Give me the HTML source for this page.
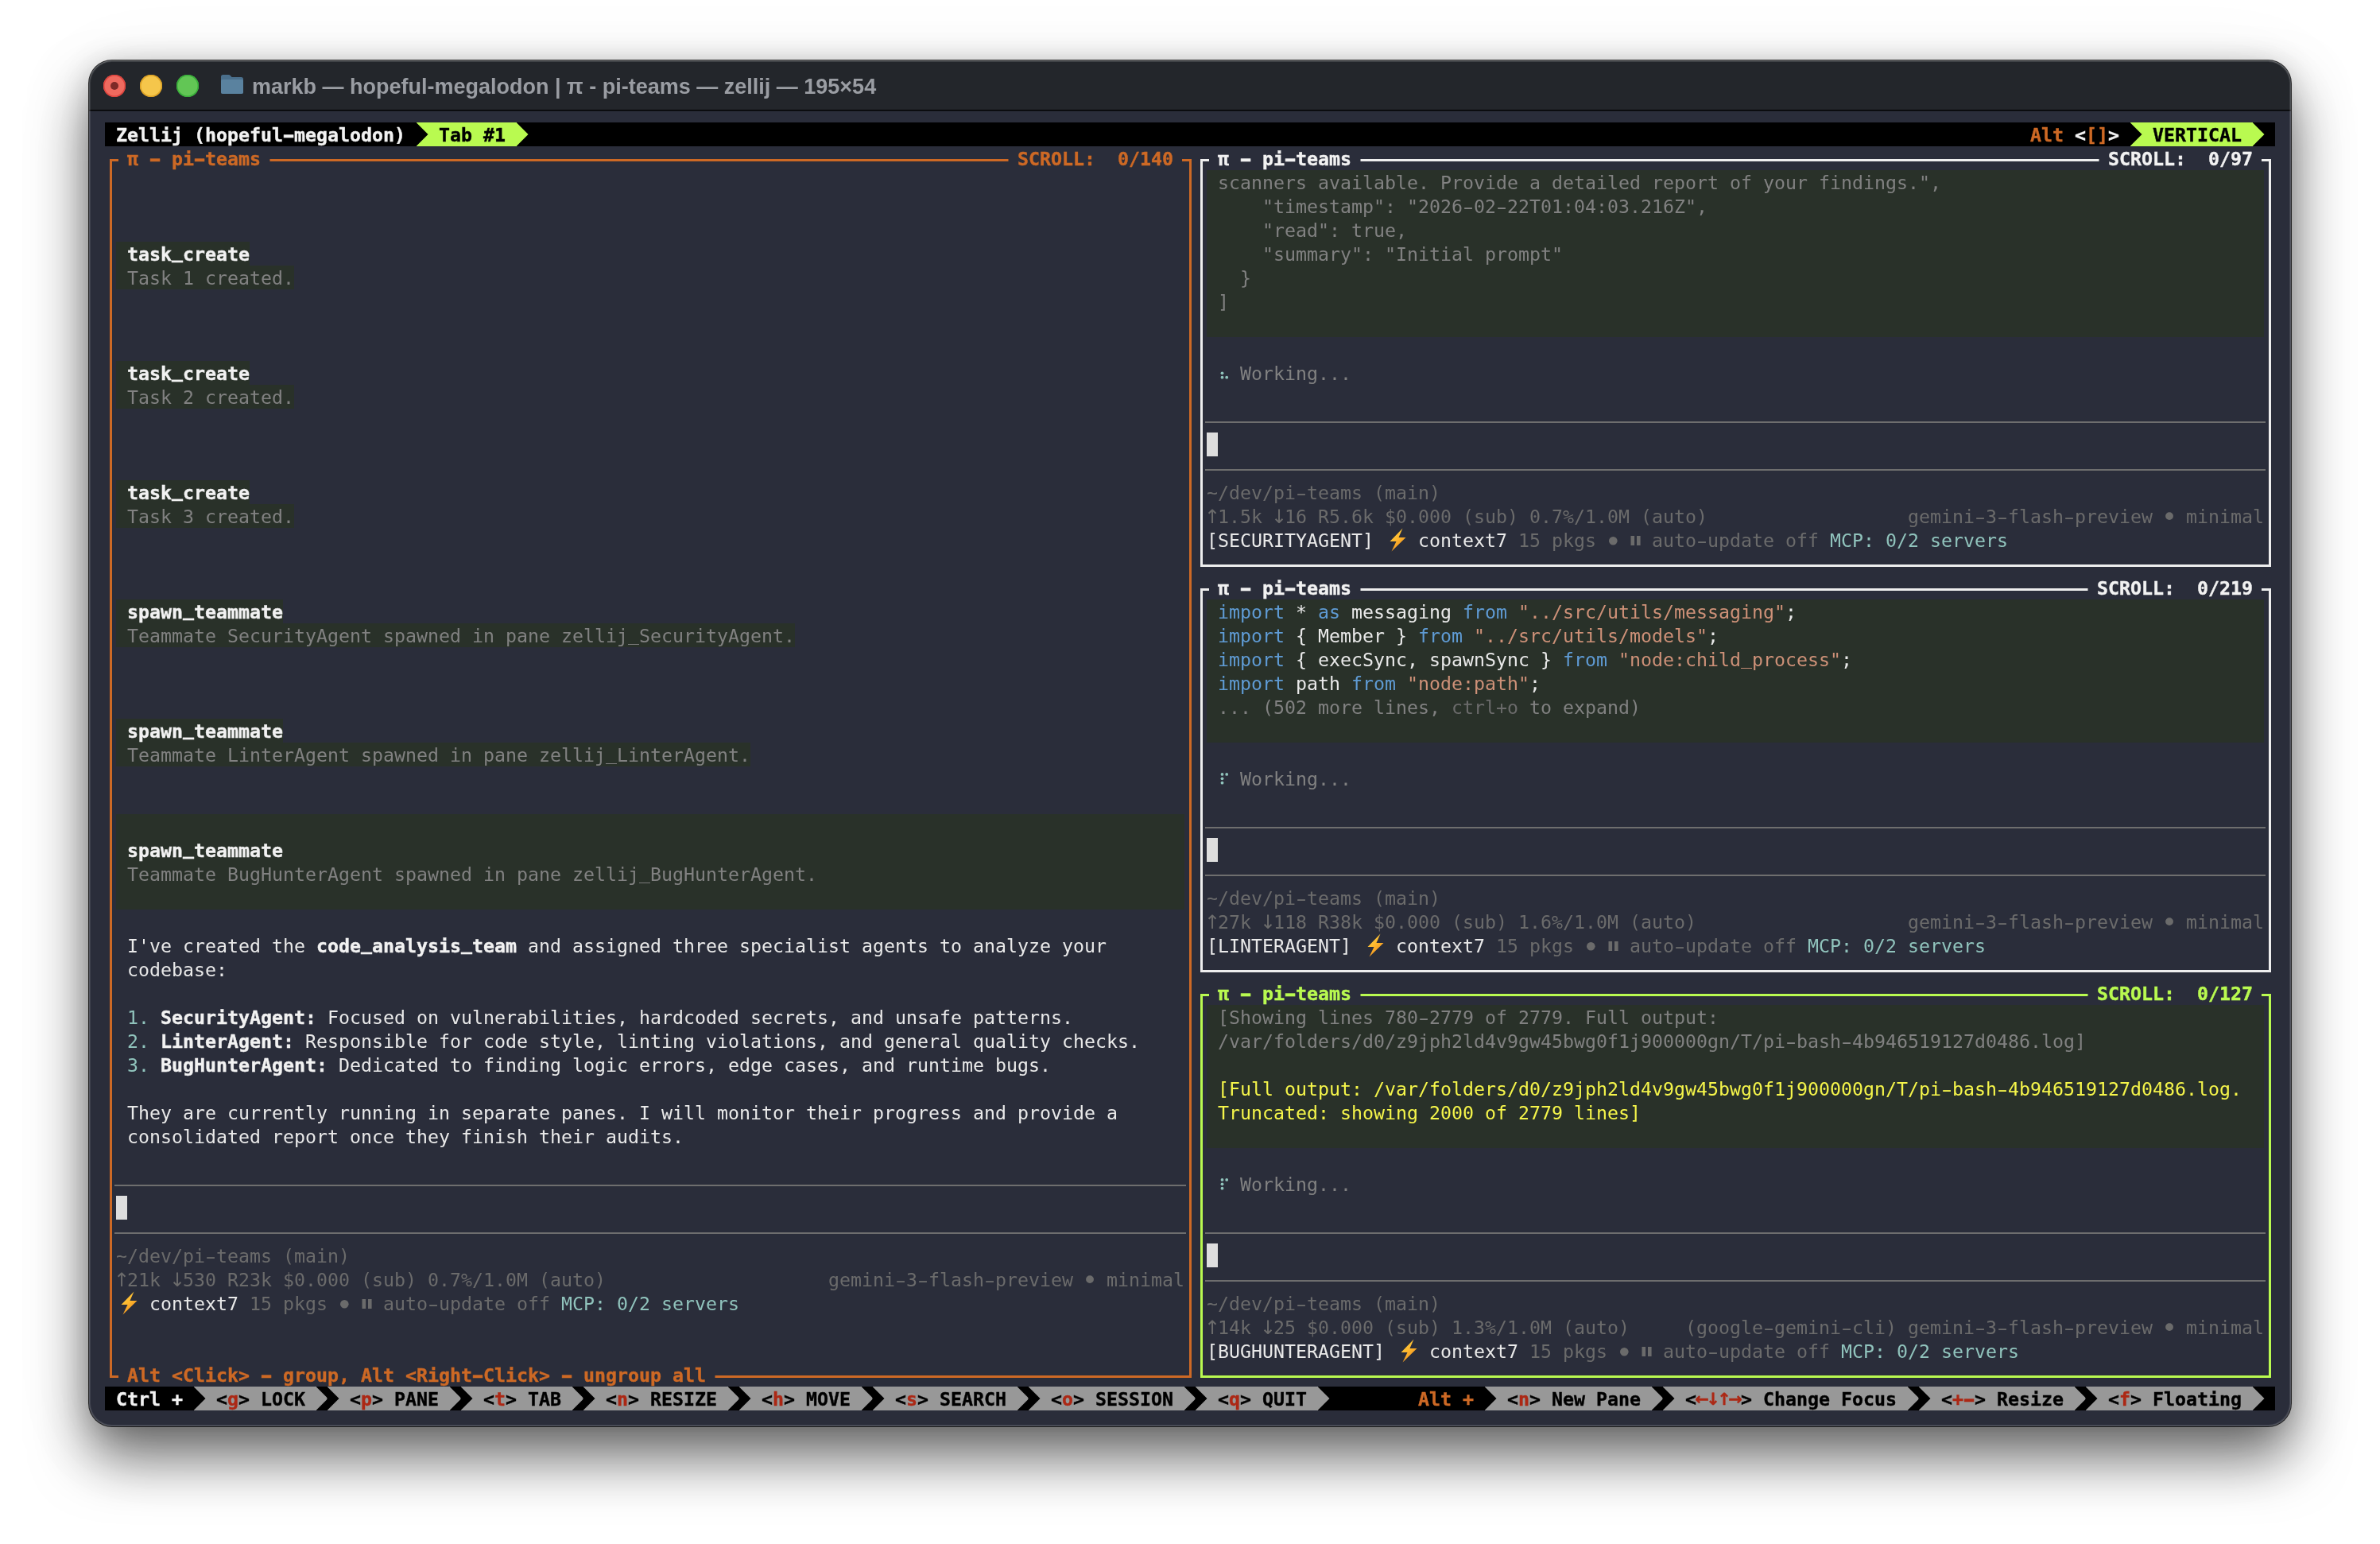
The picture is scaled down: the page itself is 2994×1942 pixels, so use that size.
<!DOCTYPE html><html><head><meta charset="utf-8"><title>zellij</title><style>
html,body{margin:0;padding:0;}
body{width:2994px;height:1942px;background:#fff;position:relative;overflow:hidden;}
#win{position:absolute;left:112px;top:76px;width:2770px;height:1718px;border-radius:29px;background:#2a2d3a;
 box-shadow:0 0 0 1px rgba(0,0,0,.8),0 40px 70px rgba(0,0,0,.55),0 4px 36px rgba(0,0,0,.15),0 16px 110px rgba(0,0,0,.07);}
#tb{position:absolute;left:0;top:0;width:2770px;height:62px;border-radius:29px 29px 0 0;background:#23262b;box-shadow:0 1px 0 #000,0 2px 0 rgba(0,0,0,.45);}
#edge{position:absolute;left:0;top:0;width:2770px;height:1718px;border-radius:29px;box-shadow:inset 0 1px 0 rgba(255,255,255,.16),inset 0 0 0 1px rgba(255,255,255,.12),inset 0 0 0 2px rgba(255,255,255,.10);pointer-events:none;}
.tl{position:absolute;top:18px;width:28px;height:28px;border-radius:50%;}
#ttl{position:absolute;left:205px;top:14.5px;height:36px;line-height:36px;font-family:"Liberation Sans",sans-serif;font-weight:bold;font-size:27px;color:#9a9da3;white-space:pre;will-change:transform;}
#lay{position:absolute;left:0;top:0;will-change:transform;}
.b{position:absolute;height:30px;}
.t{position:absolute;left:0;height:30px;line-height:30px;white-space:pre;font-family:"DejaVu Sans Mono","Liberation Mono",monospace;font-size:23.25px;letter-spacing:0.0023px;color:#e9e9e9;}
.t>span{position:absolute;top:0;}
.hy{display:inline-block;transform:scaleX(1.65);}
.us{position:relative;top:-3px;}
.w{color:#e9e9e9;} .wb{color:#f2f2f2;font-weight:bold;} .g{color:#818181;} .d{color:#6b6b6b;} .a{color:#90c3bc;}
.o{color:#cd6925;font-weight:bold;} .k{color:#000;font-weight:bold;} .r{color:#ac2815;font-weight:bold;}
.ar,.ar2,.bl{width:14px;text-align:center;font-family:"DejaVu Sans","Liberation Sans",sans-serif;letter-spacing:0;}
.ar{font-size:24px;} .ar2{font-size:21px;} .bl{font-size:34px;}
.ar,.ar2,.bl{display:flex;justify-content:center;}
.wb,.o,.k,.r,.gb{-webkit-text-stroke:0.4px currentColor;}
.y{color:#f5f54a;} .kw{color:#5f9bd4;} .s{color:#ce9178;} .gb{color:#b9fa50;font-weight:bold;}
</style></head><body>
<div id="win"><div id="tb">
<div class="tl" style="left:18px;background:#ee6a5f;box-shadow:inset 0 0 0 1.5px #e0443e"><div style="position:absolute;left:9px;top:9px;width:10px;height:10px;border-radius:50%;background:#7d2a27"></div></div>
<div class="tl" style="left:63.8px;background:#f5c64b;box-shadow:inset 0 0 0 1.5px #dea224"></div>
<div class="tl" style="left:109.6px;background:#62c655;box-shadow:inset 0 0 0 1.5px #38b03a"></div>
<svg style="position:absolute;left:165px;top:17px" width="30" height="26" viewBox="0 0 30 26"><path d="M1 3.5Q1 1 3.5 1H10.5Q12 1 13 2.2L14.6 4H26.5Q29 4 29 6.5V22.5Q29 25 26.5 25H3.5Q1 25 1 22.5Z" fill="#4a6f8c"/><path d="M1 8.5Q1 7 2.8 7H27.2Q29 7 29 8.5V22.5Q29 25 26.5 25H3.5Q1 25 1 22.5Z" fill="#5a829f"/></svg>
<div id="ttl">markb — hopeful-megalodon | π - pi-teams — zellij — 195×54</div>
</div><div id="edge"></div></div>
<div id="lay">
<div class="b" style="left:132px;top:154px;width:2730px;background:#000"></div>
<div class="b" style="left:538px;top:154px;width:112px;background:#b9fa50"></div>
<div class="b" style="left:2694px;top:154px;width:140px;background:#b9fa50"></div>
<div class="b" style="left:132px;top:1744px;width:2730px;background:#000"></div>
<div class="b" style="left:258px;top:1744px;width:140px;background:#989898"></div>
<div class="b" style="left:426px;top:1744px;width:140px;background:#989898"></div>
<div class="b" style="left:594px;top:1744px;width:126px;background:#989898"></div>
<div class="b" style="left:748px;top:1744px;width:168px;background:#989898"></div>
<div class="b" style="left:944px;top:1744px;width:140px;background:#989898"></div>
<div class="b" style="left:1112px;top:1744px;width:168px;background:#989898"></div>
<div class="b" style="left:1308px;top:1744px;width:182px;background:#989898"></div>
<div class="b" style="left:1518px;top:1744px;width:140px;background:#989898"></div>
<div class="b" style="left:1882px;top:1744px;width:196px;background:#989898"></div>
<div class="b" style="left:2106px;top:1744px;width:294px;background:#989898"></div>
<div class="b" style="left:2428px;top:1744px;width:182px;background:#989898"></div>
<div class="b" style="left:2638px;top:1744px;width:196px;background:#989898"></div>
<div class="b" style="left:146px;top:304px;width:168px;background:#293129"></div>
<div class="b" style="left:146px;top:334px;width:224px;background:#293129"></div>
<div class="b" style="left:146px;top:454px;width:168px;background:#293129"></div>
<div class="b" style="left:146px;top:484px;width:224px;background:#293129"></div>
<div class="b" style="left:146px;top:604px;width:168px;background:#293129"></div>
<div class="b" style="left:146px;top:634px;width:224px;background:#293129"></div>
<div class="b" style="left:146px;top:754px;width:210px;background:#293129"></div>
<div class="b" style="left:146px;top:784px;width:854px;background:#293129"></div>
<div class="b" style="left:146px;top:904px;width:210px;background:#293129"></div>
<div class="b" style="left:146px;top:934px;width:798px;background:#293129"></div>
<div class="b" style="left:146px;top:1024px;width:1344px;background:#293129"></div>
<div class="b" style="left:146px;top:1054px;width:1344px;background:#293129"></div>
<div class="b" style="left:146px;top:1084px;width:1344px;background:#293129"></div>
<div class="b" style="left:146px;top:1114px;width:1344px;background:#293129"></div>
<div class="b" style="left:1518px;top:214px;width:1330px;background:#293129"></div>
<div class="b" style="left:1518px;top:244px;width:1330px;background:#293129"></div>
<div class="b" style="left:1518px;top:274px;width:1330px;background:#293129"></div>
<div class="b" style="left:1518px;top:304px;width:1330px;background:#293129"></div>
<div class="b" style="left:1518px;top:334px;width:1330px;background:#293129"></div>
<div class="b" style="left:1518px;top:364px;width:1330px;background:#293129"></div>
<div class="b" style="left:1518px;top:394px;width:1330px;background:#293129"></div>
<div class="b" style="left:1518px;top:754px;width:1330px;background:#293129"></div>
<div class="b" style="left:1518px;top:784px;width:1330px;background:#293129"></div>
<div class="b" style="left:1518px;top:814px;width:1330px;background:#293129"></div>
<div class="b" style="left:1518px;top:844px;width:1330px;background:#293129"></div>
<div class="b" style="left:1518px;top:874px;width:1330px;background:#293129"></div>
<div class="b" style="left:1518px;top:904px;width:1330px;background:#293129"></div>
<div class="b" style="left:1518px;top:1264px;width:1330px;background:#293129"></div>
<div class="b" style="left:1518px;top:1294px;width:1330px;background:#293129"></div>
<div class="b" style="left:1518px;top:1324px;width:1330px;background:#293129"></div>
<div class="b" style="left:1518px;top:1354px;width:1330px;background:#293129"></div>
<div class="b" style="left:1518px;top:1384px;width:1330px;background:#293129"></div>
<div class="b" style="left:1518px;top:1414px;width:1330px;background:#293129"></div>
<svg style="position:absolute;left:0;top:0" width="2994" height="1942" viewBox="0 0 2994 1942"><defs><linearGradient id="bg1" x1="0" y1="0" x2="0.6" y2="1"><stop offset="0" stop-color="#ffd94a"/><stop offset="0.55" stop-color="#fdb72e"/><stop offset="1" stop-color="#f08a1c"/></linearGradient></defs>
<rect x="524" y="154" width="14" height="30" fill="#b9fa50"/>
<polygon points="523.5,154 538.5,169.0 523.5,184" fill="#000"/>
<rect x="650" y="154" width="14" height="30" fill="#000"/>
<polygon points="649.5,154 664.5,169.0 649.5,184" fill="#b9fa50"/>
<rect x="2680" y="154" width="14" height="30" fill="#b9fa50"/>
<polygon points="2679.5,154 2694.5,169.0 2679.5,184" fill="#000"/>
<rect x="2834" y="154" width="14" height="30" fill="#000"/>
<polygon points="2833.5,154 2848.5,169.0 2833.5,184" fill="#b9fa50"/>
<rect x="244" y="1744" width="14" height="30" fill="#989898"/>
<polygon points="243.5,1744 258.5,1759.0 243.5,1774" fill="#000"/>
<rect x="398" y="1744" width="14" height="30" fill="#000"/>
<polygon points="397.5,1744 412.5,1759.0 397.5,1774" fill="#989898"/>
<rect x="412" y="1744" width="14" height="30" fill="#989898"/>
<polygon points="411.5,1744 426.5,1759.0 411.5,1774" fill="#000"/>
<rect x="566" y="1744" width="14" height="30" fill="#000"/>
<polygon points="565.5,1744 580.5,1759.0 565.5,1774" fill="#989898"/>
<rect x="580" y="1744" width="14" height="30" fill="#989898"/>
<polygon points="579.5,1744 594.5,1759.0 579.5,1774" fill="#000"/>
<rect x="720" y="1744" width="14" height="30" fill="#000"/>
<polygon points="719.5,1744 734.5,1759.0 719.5,1774" fill="#989898"/>
<rect x="734" y="1744" width="14" height="30" fill="#989898"/>
<polygon points="733.5,1744 748.5,1759.0 733.5,1774" fill="#000"/>
<rect x="916" y="1744" width="14" height="30" fill="#000"/>
<polygon points="915.5,1744 930.5,1759.0 915.5,1774" fill="#989898"/>
<rect x="930" y="1744" width="14" height="30" fill="#989898"/>
<polygon points="929.5,1744 944.5,1759.0 929.5,1774" fill="#000"/>
<rect x="1084" y="1744" width="14" height="30" fill="#000"/>
<polygon points="1083.5,1744 1098.5,1759.0 1083.5,1774" fill="#989898"/>
<rect x="1098" y="1744" width="14" height="30" fill="#989898"/>
<polygon points="1097.5,1744 1112.5,1759.0 1097.5,1774" fill="#000"/>
<rect x="1280" y="1744" width="14" height="30" fill="#000"/>
<polygon points="1279.5,1744 1294.5,1759.0 1279.5,1774" fill="#989898"/>
<rect x="1294" y="1744" width="14" height="30" fill="#989898"/>
<polygon points="1293.5,1744 1308.5,1759.0 1293.5,1774" fill="#000"/>
<rect x="1490" y="1744" width="14" height="30" fill="#000"/>
<polygon points="1489.5,1744 1504.5,1759.0 1489.5,1774" fill="#989898"/>
<rect x="1504" y="1744" width="14" height="30" fill="#989898"/>
<polygon points="1503.5,1744 1518.5,1759.0 1503.5,1774" fill="#000"/>
<rect x="1658" y="1744" width="14" height="30" fill="#000"/>
<polygon points="1657.5,1744 1672.5,1759.0 1657.5,1774" fill="#989898"/>
<rect x="1868" y="1744" width="14" height="30" fill="#989898"/>
<polygon points="1867.5,1744 1882.5,1759.0 1867.5,1774" fill="#000"/>
<rect x="2078" y="1744" width="14" height="30" fill="#000"/>
<polygon points="2077.5,1744 2092.5,1759.0 2077.5,1774" fill="#989898"/>
<rect x="2092" y="1744" width="14" height="30" fill="#989898"/>
<polygon points="2091.5,1744 2106.5,1759.0 2091.5,1774" fill="#000"/>
<rect x="2400" y="1744" width="14" height="30" fill="#000"/>
<polygon points="2399.5,1744 2414.5,1759.0 2399.5,1774" fill="#989898"/>
<rect x="2414" y="1744" width="14" height="30" fill="#989898"/>
<polygon points="2413.5,1744 2428.5,1759.0 2413.5,1774" fill="#000"/>
<rect x="2610" y="1744" width="14" height="30" fill="#000"/>
<polygon points="2609.5,1744 2624.5,1759.0 2609.5,1774" fill="#989898"/>
<rect x="2624" y="1744" width="14" height="30" fill="#989898"/>
<polygon points="2623.5,1744 2638.5,1759.0 2623.5,1774" fill="#000"/>
<rect x="2834" y="1744" width="14" height="30" fill="#000"/>
<polygon points="2833.5,1744 2848.5,1759.0 2833.5,1774" fill="#989898"/>
<rect x="138" y="200" width="3" height="1533" fill="#cd6925"/>
<rect x="1496" y="200" width="3" height="1533" fill="#cd6925"/>
<rect x="138" y="200" width="11" height="3" fill="#cd6925"/>
<rect x="339.5" y="200" width="929" height="3" fill="#cd6925"/>
<rect x="1487" y="200" width="12" height="3" fill="#cd6925"/>
<rect x="138" y="1730" width="11" height="3" fill="#cd6925"/>
<rect x="899.5" y="1730" width="599.5" height="3" fill="#cd6925"/>
<rect x="1510" y="200" width="3" height="513" fill="#eeeeee"/>
<rect x="2854" y="200" width="3" height="513" fill="#eeeeee"/>
<rect x="1510" y="200" width="11" height="3" fill="#eeeeee"/>
<rect x="1711.5" y="200" width="929" height="3" fill="#eeeeee"/>
<rect x="2845" y="200" width="12" height="3" fill="#eeeeee"/>
<rect x="1510" y="710" width="1347" height="3" fill="#eeeeee"/>
<rect x="1510" y="740" width="3" height="483" fill="#eeeeee"/>
<rect x="2854" y="740" width="3" height="483" fill="#eeeeee"/>
<rect x="1510" y="740" width="11" height="3" fill="#eeeeee"/>
<rect x="1711.5" y="740" width="915" height="3" fill="#eeeeee"/>
<rect x="2845" y="740" width="12" height="3" fill="#eeeeee"/>
<rect x="1510" y="1220" width="1347" height="3" fill="#eeeeee"/>
<rect x="1510" y="1250" width="3" height="483" fill="#b9fa50"/>
<rect x="2854" y="1250" width="3" height="483" fill="#b9fa50"/>
<rect x="1510" y="1250" width="11" height="3" fill="#b9fa50"/>
<rect x="1711.5" y="1250" width="915" height="3" fill="#b9fa50"/>
<rect x="2845" y="1250" width="12" height="3" fill="#b9fa50"/>
<rect x="1510" y="1730" width="1347" height="3" fill="#b9fa50"/>
<rect x="144" y="1490" width="1348" height="2" fill="#6e6e6e"/>
<rect x="146" y="1504" width="14" height="30" fill="#dedede"/>
<rect x="144" y="1550" width="1348" height="2" fill="#6e6e6e"/>
<polygon points="168.5,1624.5 152.5,1641 160.5,1641 154.5,1653.5 172.5,1636 163.5,1636" fill="url(#bg1)"/>
<circle cx="433.3" cy="1640.2" r="5.3" fill="#6b6b6b"/>
<rect x="455.5" y="1634" width="4.6" height="12" fill="#6b6b6b"/>
<rect x="463" y="1634" width="4.6" height="12" fill="#6b6b6b"/>
<circle cx="1537.5" cy="469.3" r="1.9" fill="#90c3bc"/>
<circle cx="1537.5" cy="474.7" r="1.9" fill="#90c3bc"/>
<circle cx="1543.2" cy="474.7" r="1.9" fill="#90c3bc"/>
<rect x="1516" y="530" width="1334" height="2" fill="#6e6e6e"/>
<rect x="1518" y="544" width="14" height="30" fill="#dedede"/>
<rect x="1516" y="590" width="1334" height="2" fill="#6e6e6e"/>
<polygon points="1764.5,664.5 1748.5,681 1756.5,681 1750.5,693.5 1768.5,676 1759.5,676" fill="url(#bg1)"/>
<circle cx="2029.3" cy="680.2" r="5.3" fill="#6b6b6b"/>
<rect x="2051.5" y="674" width="4.6" height="12" fill="#6b6b6b"/>
<rect x="2059" y="674" width="4.6" height="12" fill="#6b6b6b"/>
<circle cx="1537.5" cy="973.9" r="1.9" fill="#90c3bc"/>
<circle cx="1537.5" cy="979.3" r="1.9" fill="#90c3bc"/>
<circle cx="1537.5" cy="984.7" r="1.9" fill="#90c3bc"/>
<circle cx="1543.2" cy="973.9" r="1.9" fill="#90c3bc"/>
<rect x="1516" y="1040" width="1334" height="2" fill="#6e6e6e"/>
<rect x="1518" y="1054" width="14" height="30" fill="#dedede"/>
<rect x="1516" y="1100" width="1334" height="2" fill="#6e6e6e"/>
<polygon points="1736.5,1174.5 1720.5,1191 1728.5,1191 1722.5,1203.5 1740.5,1186 1731.5,1186" fill="url(#bg1)"/>
<circle cx="2001.3" cy="1190.2" r="5.3" fill="#6b6b6b"/>
<rect x="2023.5" y="1184" width="4.6" height="12" fill="#6b6b6b"/>
<rect x="2031" y="1184" width="4.6" height="12" fill="#6b6b6b"/>
<circle cx="1537.5" cy="1483.9" r="1.9" fill="#90c3bc"/>
<circle cx="1537.5" cy="1489.3" r="1.9" fill="#90c3bc"/>
<circle cx="1537.5" cy="1494.7" r="1.9" fill="#90c3bc"/>
<circle cx="1543.2" cy="1483.9" r="1.9" fill="#90c3bc"/>
<rect x="1516" y="1550" width="1334" height="2" fill="#6e6e6e"/>
<rect x="1518" y="1564" width="14" height="30" fill="#dedede"/>
<rect x="1516" y="1610" width="1334" height="2" fill="#6e6e6e"/>
<polygon points="1778.5,1684.5 1762.5,1701 1770.5,1701 1764.5,1713.5 1782.5,1696 1773.5,1696" fill="url(#bg1)"/>
<circle cx="2043.3" cy="1700.2" r="5.3" fill="#6b6b6b"/>
<rect x="2065.5" y="1694" width="4.6" height="12" fill="#6b6b6b"/>
<rect x="2073" y="1694" width="4.6" height="12" fill="#6b6b6b"/>
</svg>
<div class="t" style="top:155px"><span class="wb" style="left:146px">Zellij (hopeful<span class="hy">-</span>megalodon)</span><span class="k" style="left:552px">Tab #1</span><span class="o" style="left:2554px">Alt</span><span class="wb" style="left:2610px">&lt;</span><span class="o" style="left:2624px">[]</span><span class="wb" style="left:2652px">&gt;</span><span class="k" style="left:2708px">VERTICAL</span></div>
<div class="t" style="top:185px"><span class="o" style="left:160px">π <span class="hy">-</span> pi<span class="hy">-</span>teams</span><span class="o" style="left:1280px">SCROLL:  0/140</span><span class="wb" style="left:1532px">π <span class="hy">-</span> pi<span class="hy">-</span>teams</span><span class="wb" style="left:2652px">SCROLL:  0/97</span></div>
<div class="t" style="top:215px"><span class="g" style="left:1532px">scanners available. Provide a detailed report of your findings.&quot;,</span></div>
<div class="t" style="top:245px"><span class="g" style="left:1588px">&quot;timestamp&quot;: &quot;2026<span class="hy">-</span>02<span class="hy">-</span>22T01:04:03.216Z&quot;,</span></div>
<div class="t" style="top:275px"><span class="g" style="left:1588px">&quot;read&quot;: true,</span></div>
<div class="t" style="top:305px"><span class="wb" style="left:160px">task<span class="us">_</span>create</span><span class="g" style="left:1588px">&quot;summary&quot;: &quot;Initial prompt&quot;</span></div>
<div class="t" style="top:335px"><span class="g" style="left:160px">Task 1 created.</span><span class="g" style="left:1560px">}</span></div>
<div class="t" style="top:365px"><span class="g" style="left:1532px">]</span></div>
<div class="t" style="top:455px"><span class="wb" style="left:160px">task<span class="us">_</span>create</span><span class="g" style="left:1560px">Working...</span></div>
<div class="t" style="top:485px"><span class="g" style="left:160px">Task 2 created.</span></div>
<div class="t" style="top:605px"><span class="wb" style="left:160px">task<span class="us">_</span>create</span><span class="d" style="left:1518px">~/dev/pi<span class="hy">-</span>teams (main)</span></div>
<div class="t" style="top:635px"><span class="g" style="left:160px">Task 3 created.</span><span class="d ar" style="left:1518px">↑</span><span class="d" style="left:1532px">1.5k </span><span class="d ar" style="left:1602px">↓</span><span class="d" style="left:1616px">16 R5.6k $0.000 (sub) 0.7%/1.0M (auto)</span><span class="d" style="left:2400px">gemini<span class="hy">-</span>3<span class="hy">-</span>flash<span class="hy">-</span>preview </span><span class="d bl" style="left:2722px">•</span><span class="d" style="left:2736px"> minimal</span></div>
<div class="t" style="top:665px"><span class="w" style="left:1518px">[SECURITYAGENT]</span><span class="w" style="left:1784px">context7</span><span class="d" style="left:1910px">15 pkgs</span><span class="d" style="left:2078px">auto<span class="hy">-</span>update off</span><span class="a" style="left:2302px">MCP: 0/2 servers</span></div>
<div class="t" style="top:725px"><span class="wb" style="left:1532px">π <span class="hy">-</span> pi<span class="hy">-</span>teams</span><span class="wb" style="left:2638px">SCROLL:  0/219</span></div>
<div class="t" style="top:755px"><span class="wb" style="left:160px">spawn<span class="us">_</span>teammate</span><span class="kw" style="left:1532px">import</span><span class="w" style="left:1630px">*</span><span class="kw" style="left:1658px">as</span><span class="w" style="left:1700px">messaging</span><span class="kw" style="left:1840px">from</span><span class="s" style="left:1910px">&quot;../src/utils/messaging&quot;</span><span class="w" style="left:2246px">;</span></div>
<div class="t" style="top:785px"><span class="g" style="left:160px">Teammate SecurityAgent spawned in pane zellij<span class="us">_</span>SecurityAgent.</span><span class="kw" style="left:1532px">import</span><span class="w" style="left:1630px">{ Member }</span><span class="kw" style="left:1784px">from</span><span class="s" style="left:1854px">&quot;../src/utils/models&quot;</span><span class="w" style="left:2148px">;</span></div>
<div class="t" style="top:815px"><span class="kw" style="left:1532px">import</span><span class="w" style="left:1630px">{ execSync, spawnSync }</span><span class="kw" style="left:1966px">from</span><span class="s" style="left:2036px">&quot;node:child<span class="us">_</span>process&quot;</span><span class="w" style="left:2316px">;</span></div>
<div class="t" style="top:845px"><span class="kw" style="left:1532px">import</span><span class="w" style="left:1630px">path</span><span class="kw" style="left:1700px">from</span><span class="s" style="left:1770px">&quot;node:path&quot;</span><span class="w" style="left:1924px">;</span></div>
<div class="t" style="top:875px"><span class="g" style="left:1532px">... (502 more lines,</span><span class="d" style="left:1826px">ctrl+o</span><span class="g" style="left:1910px"> to expand)</span></div>
<div class="t" style="top:905px"><span class="wb" style="left:160px">spawn<span class="us">_</span>teammate</span></div>
<div class="t" style="top:935px"><span class="g" style="left:160px">Teammate LinterAgent spawned in pane zellij<span class="us">_</span>LinterAgent.</span></div>
<div class="t" style="top:965px"><span class="g" style="left:1560px">Working...</span></div>
<div class="t" style="top:1055px"><span class="wb" style="left:160px">spawn<span class="us">_</span>teammate</span></div>
<div class="t" style="top:1085px"><span class="g" style="left:160px">Teammate BugHunterAgent spawned in pane zellij<span class="us">_</span>BugHunterAgent.</span></div>
<div class="t" style="top:1115px"><span class="d" style="left:1518px">~/dev/pi<span class="hy">-</span>teams (main)</span></div>
<div class="t" style="top:1145px"><span class="d ar" style="left:1518px">↑</span><span class="d" style="left:1532px">27k </span><span class="d ar" style="left:1588px">↓</span><span class="d" style="left:1602px">118 R38k $0.000 (sub) 1.6%/1.0M (auto)</span><span class="d" style="left:2400px">gemini<span class="hy">-</span>3<span class="hy">-</span>flash<span class="hy">-</span>preview </span><span class="d bl" style="left:2722px">•</span><span class="d" style="left:2736px"> minimal</span></div>
<div class="t" style="top:1175px"><span class="w" style="left:160px">I&#x27;ve created the </span><span class="wb" style="left:398px">code<span class="us">_</span>analysis<span class="us">_</span>team</span><span class="w" style="left:650px"> and assigned three specialist agents to analyze your</span><span class="w" style="left:1518px">[LINTERAGENT]</span><span class="w" style="left:1756px">context7</span><span class="d" style="left:1882px">15 pkgs</span><span class="d" style="left:2050px">auto<span class="hy">-</span>update off</span><span class="a" style="left:2274px">MCP: 0/2 servers</span></div>
<div class="t" style="top:1205px"><span class="w" style="left:160px">codebase:</span></div>
<div class="t" style="top:1235px"><span class="gb" style="left:1532px">π <span class="hy">-</span> pi<span class="hy">-</span>teams</span><span class="gb" style="left:2638px">SCROLL:  0/127</span></div>
<div class="t" style="top:1265px"><span class="a" style="left:160px">1.</span><span class="wb" style="left:202px">SecurityAgent:</span><span class="w" style="left:398px"> Focused on vulnerabilities, hardcoded secrets, and unsafe patterns.</span><span class="g" style="left:1532px">[Showing lines 780<span class="hy">-</span>2779 of 2779. Full output:</span></div>
<div class="t" style="top:1295px"><span class="a" style="left:160px">2.</span><span class="wb" style="left:202px">LinterAgent:</span><span class="w" style="left:370px"> Responsible for code style, linting violations, and general quality checks.</span><span class="g" style="left:1532px">/var/folders/d0/z9jph2ld4v9gw45bwg0f1j900000gn/T/pi<span class="hy">-</span>bash<span class="hy">-</span>4b946519127d0486.log]</span></div>
<div class="t" style="top:1325px"><span class="a" style="left:160px">3.</span><span class="wb" style="left:202px">BugHunterAgent:</span><span class="w" style="left:412px"> Dedicated to finding logic errors, edge cases, and runtime bugs.</span></div>
<div class="t" style="top:1355px"><span class="y" style="left:1532px">[Full output: /var/folders/d0/z9jph2ld4v9gw45bwg0f1j900000gn/T/pi<span class="hy">-</span>bash<span class="hy">-</span>4b946519127d0486.log.</span></div>
<div class="t" style="top:1385px"><span class="w" style="left:160px">They are currently running in separate panes. I will monitor their progress and provide a</span><span class="y" style="left:1532px">Truncated: showing 2000 of 2779 lines]</span></div>
<div class="t" style="top:1415px"><span class="w" style="left:160px">consolidated report once they finish their audits.</span></div>
<div class="t" style="top:1475px"><span class="g" style="left:1560px">Working...</span></div>
<div class="t" style="top:1565px"><span class="d" style="left:146px">~/dev/pi<span class="hy">-</span>teams (main)</span></div>
<div class="t" style="top:1595px"><span class="d ar" style="left:146px">↑</span><span class="d" style="left:160px">21k </span><span class="d ar" style="left:216px">↓</span><span class="d" style="left:230px">530 R23k $0.000 (sub) 0.7%/1.0M (auto)</span><span class="d" style="left:1042px">gemini<span class="hy">-</span>3<span class="hy">-</span>flash<span class="hy">-</span>preview </span><span class="d bl" style="left:1364px">•</span><span class="d" style="left:1378px"> minimal</span></div>
<div class="t" style="top:1625px"><span class="w" style="left:188px">context7</span><span class="d" style="left:314px">15 pkgs</span><span class="d" style="left:482px">auto<span class="hy">-</span>update off</span><span class="a" style="left:706px">MCP: 0/2 servers</span><span class="d" style="left:1518px">~/dev/pi<span class="hy">-</span>teams (main)</span></div>
<div class="t" style="top:1655px"><span class="d ar" style="left:1518px">↑</span><span class="d" style="left:1532px">14k </span><span class="d ar" style="left:1588px">↓</span><span class="d" style="left:1602px">25 $0.000 (sub) 1.3%/1.0M (auto)</span><span class="d" style="left:2120px">(google<span class="hy">-</span>gemini<span class="hy">-</span>cli) gemini<span class="hy">-</span>3<span class="hy">-</span>flash<span class="hy">-</span>preview </span><span class="d bl" style="left:2722px">•</span><span class="d" style="left:2736px"> minimal</span></div>
<div class="t" style="top:1685px"><span class="w" style="left:1518px">[BUGHUNTERAGENT]</span><span class="w" style="left:1798px">context7</span><span class="d" style="left:1924px">15 pkgs</span><span class="d" style="left:2092px">auto<span class="hy">-</span>update off</span><span class="a" style="left:2316px">MCP: 0/2 servers</span></div>
<div class="t" style="top:1715px"><span class="o" style="left:160px">Alt &lt;Click&gt; <span class="hy">-</span> group, Alt &lt;Right<span class="hy">-</span>Click&gt; <span class="hy">-</span> ungroup all</span></div>
<div class="t" style="top:1745px"><span class="wb" style="left:146px">Ctrl +</span><span class="k" style="left:272px">&lt;</span><span class="r" style="left:286px">g</span><span class="k" style="left:300px">&gt;</span><span class="k" style="left:328px">LOCK</span><span class="k" style="left:440px">&lt;</span><span class="r" style="left:454px">p</span><span class="k" style="left:468px">&gt;</span><span class="k" style="left:496px">PANE</span><span class="k" style="left:608px">&lt;</span><span class="r" style="left:622px">t</span><span class="k" style="left:636px">&gt;</span><span class="k" style="left:664px">TAB</span><span class="k" style="left:762px">&lt;</span><span class="r" style="left:776px">n</span><span class="k" style="left:790px">&gt;</span><span class="k" style="left:818px">RESIZE</span><span class="k" style="left:958px">&lt;</span><span class="r" style="left:972px">h</span><span class="k" style="left:986px">&gt;</span><span class="k" style="left:1014px">MOVE</span><span class="k" style="left:1126px">&lt;</span><span class="r" style="left:1140px">s</span><span class="k" style="left:1154px">&gt;</span><span class="k" style="left:1182px">SEARCH</span><span class="k" style="left:1322px">&lt;</span><span class="r" style="left:1336px">o</span><span class="k" style="left:1350px">&gt;</span><span class="k" style="left:1378px">SESSION</span><span class="k" style="left:1532px">&lt;</span><span class="r" style="left:1546px">q</span><span class="k" style="left:1560px">&gt;</span><span class="k" style="left:1588px">QUIT</span><span class="o" style="left:1784px">Alt +</span><span class="k" style="left:1896px">&lt;</span><span class="r" style="left:1910px">n</span><span class="k" style="left:1924px">&gt;</span><span class="k" style="left:1952px">New Pane</span><span class="k" style="left:2120px">&lt;</span><span class="r ar2" style="left:2134px">←</span><span class="r ar2" style="left:2148px">↓</span><span class="r ar2" style="left:2162px">↑</span><span class="r ar2" style="left:2176px">→</span><span class="k" style="left:2190px">&gt;</span><span class="k" style="left:2218px">Change Focus</span><span class="k" style="left:2442px">&lt;</span><span class="r" style="left:2456px">+<span class="hy">-</span></span><span class="k" style="left:2484px">&gt;</span><span class="k" style="left:2512px">Resize</span><span class="k" style="left:2652px">&lt;</span><span class="r" style="left:2666px">f</span><span class="k" style="left:2680px">&gt;</span><span class="k" style="left:2708px">Floating</span></div>
</div></body></html>
